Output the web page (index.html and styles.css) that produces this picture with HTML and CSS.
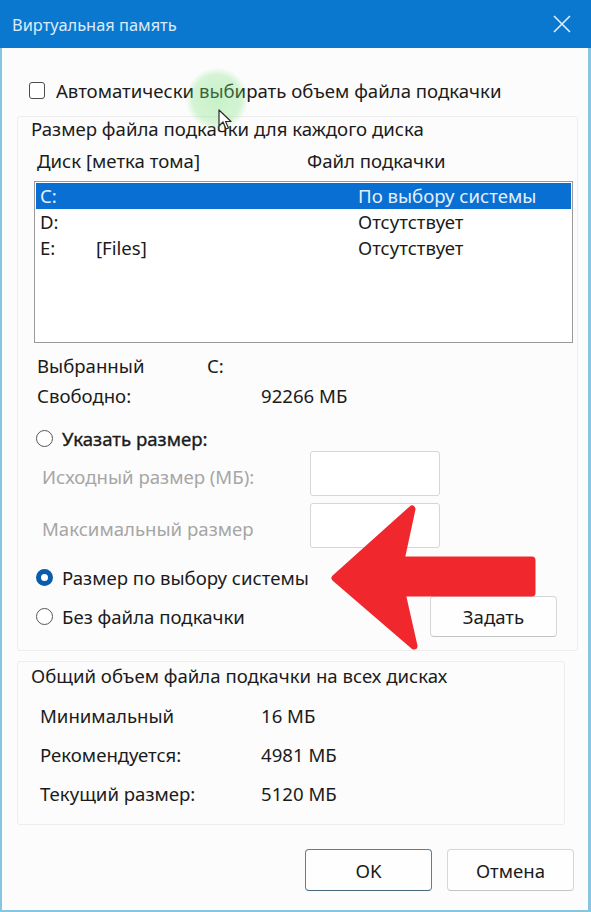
FILE: index.html
```html
<!DOCTYPE html>
<html lang="ru">
<head>
<meta charset="utf-8">
<title>Виртуальная память</title>
<link rel="stylesheet" href="styles.css">
</head>
<body>
<div class="window">
  <div class="titlebar">
    <span class="title">Виртуальная память</span>
    <svg class="close" width="18" height="18" viewBox="0 0 18 18"><path d="M1 1 L17 17 M17 1 L1 17" stroke="#e3eef9" stroke-width="1.6" fill="none"/></svg>
  </div>
  <div class="body">
    <div class="check-row"><span class="checkbox"></span><span>Автоматически выбирать объем файла подкачки</span></div>

    <section class="group group-disk">
      <div class="group-title">Размер файла подкачки для каждого диска</div>
      <div class="list-head"><span class="col-drive">Диск [метка тома]</span><span class="col-file">Файл подкачки</span></div>
      <div class="listbox">
        <div class="list-row selected"><span class="c-drive">C:</span><span class="c-label"></span><span class="c-file">По выбору системы</span></div>
        <div class="list-row"><span class="c-drive">D:</span><span class="c-label"></span><span class="c-file">Отсутствует</span></div>
        <div class="list-row"><span class="c-drive">E:</span><span class="c-label">[Files]</span><span class="c-file">Отсутствует</span></div>
      </div>
      <div class="info-row row-selected"><span class="info-k">Выбранный</span><span class="info-v">C:</span></div>
      <div class="info-row row-free"><span class="info-k">Свободно:</span><span class="info-v">92266 МБ</span></div>
      <div class="radio-row row-custom"><span class="radio"></span><span class="radio-text strong">Указать размер:</span></div>
      <div class="field-row row-f1"><span class="field-label">Исходный размер (МБ):</span><span class="input"></span></div>
      <div class="field-row row-f2"><span class="field-label">Максимальный размер</span><span class="input"></span></div>
      <div class="radio-row row-system"><span class="radio checked"></span><span class="radio-text">Размер по выбору системы</span></div>
      <div class="radio-row row-none"><span class="radio"></span><span class="radio-text">Без файла подкачки</span><button class="btn btn-set">Задать</button></div>
    </section>

    <section class="group group-total">
      <div class="group-title">Общий объем файла подкачки на всех дисках</div>
      <div class="total-row first"><span class="total-k">Минимальный</span><span>16 МБ</span></div>
      <div class="total-row"><span class="total-k">Рекомендуется:</span><span>4981 МБ</span></div>
      <div class="total-row"><span class="total-k">Текущий размер:</span><span>5120 МБ</span></div>
    </section>

    <div class="dialog-buttons">
      <button class="btn btn-ok">OK</button>
      <button class="btn btn-cancel">Отмена</button>
    </div>
  </div>

  <div class="cursor-glow"></div>
  <svg class="cursor" width="16" height="22" viewBox="0 0 16 22"><path d="M1 1 L1 17 L5 13 L8 20 L10.5 19 L7.5 12.5 L13 12.5 Z" fill="#ffffff" stroke="#2a2a2a" stroke-width="1.2" stroke-linejoin="round"/></svg>
  <svg class="arrow" width="220" height="160" viewBox="0 0 220 160">
    <polygon points="16,76 93,7 82,58 213,58 213,91 83,91 95,144" fill="#f0282e" stroke="#f0282e" stroke-width="7" stroke-linejoin="round"/>
  </svg>
</div>
</body>
</html>
```

FILE: styles.css
```css
* { box-sizing: border-box; }
html, body { margin: 0; padding: 0; }
body {
  width: 591px;
  height: 912px;
  overflow: hidden;
  font-family: "Noto Sans", "Liberation Sans", sans-serif;
  font-size: 18.6px;
  color: #1b1b1b;
  background: #fcfcfc;
}
.window {
  position: relative;
  width: 591px;
  height: 912px;
  display: flex;
  flex-direction: column;
}
.titlebar {
  height: 48px;
  flex: none;
  background: #0b78d0;
  display: flex;
  align-items: center;
  justify-content: space-between;
  padding: 0 20px 0 12px;
}
.title { color: #dcebf8; font-size: 16.4px; }
.body {
  flex: 1;
  border-left: 2px solid #86c6e2;
  border-right: 3px solid #86c6e2;
  border-bottom: 2px solid #86c6e2;
  background: #fcfcfc;
  padding: 0 0 0 15px;
}
.check-row {
  height: 24px;
  margin-top: 30px;
  display: flex;
  align-items: center;
  padding-left: 12px;
}
.checkbox {
  width: 16px; height: 17px;
  border: 1.5px solid #4d4d4d;
  border-radius: 3px;
  margin-right: 11px;
  background: #fff;
}
.group {
  border: 1px solid #ededed;
  border-radius: 3px;
}
.group-disk { margin-top: 14px; width: 561px; height: 535px; }
.group-title { height: 24px; line-height: 24px; padding-left: 13px; }
.list-head { display: flex; height: 24px; line-height: 24px; margin-top: 8px; }
.col-drive { padding-left: 19px; width: 289px; }
.listbox {
  margin: 8px 0 0 16px;
  width: 539px;
  height: 162px;
  border: 1px solid #9a9a9a;
  background: #fff;
  padding: 1px;
}
.list-row { display: flex; height: 26px; line-height: 26px; }
.list-row.selected { background: #0a6fd2; color: #e3effb; }
.c-drive { width: 60px; padding-left: 4px; }
.c-label { width: 262px; }
.info-row { display: flex; height: 24px; line-height: 24px; padding-left: 19px; }
.row-selected { margin-top: 11px; }
.row-selected .info-k { width: 170px; }
.row-free { margin-top: 6px; }
.row-free .info-k { width: 224px; }
.radio-row { display: flex; align-items: center; height: 24px; padding-left: 18px; }
.radio {
  width: 17px; height: 17px;
  border: 1.3px solid #555;
  border-radius: 50%;
  margin-right: 9px;
  background: #fff;
  flex: none;
}
.radio.checked { border: 5.5px solid #0a5bab; background: #fff; }
.strong { -webkit-text-stroke: 0.35px #1b1b1b; }
.row-custom { margin-top: 18px; }
.field-row { display: flex; align-items: center; height: 45px; padding-left: 24px; }
.field-label { width: 268px; color: #a6a6a6; padding-top: 6px; }
.input { width: 130px; height: 45px; border: 1px solid #d6d6d6; border-radius: 3px; background: #fff; }
.row-f1 { margin-top: 1px; }
.row-f2 { margin-top: 7px; }
.row-system { margin-top: 17px; }
.row-none { margin-top: 7px; height: 41px; }
.row-none .radio-text { width: 368px; }
.btn {
  font-family: inherit;
  font-size: 18.6px;
  color: #1b1b1b;
  background: #fefefe;
  border: 1px solid #d6d6d6;
  border-bottom-color: #c4c4c4;
  border-radius: 4px;
  padding: 0;
}
.btn-set { width: 127px; height: 41px; }
.group-total { margin-top: 10px; width: 548px; height: 164px; }
.group-total .group-title { margin-top: 2px; }
.total-row { display: flex; height: 24px; line-height: 24px; padding-left: 22px; margin-top: 15px; }
.total-row.first { margin-top: 16px; }
.total-k { width: 221px; }
.dialog-buttons {
  display: flex;
  gap: 15px;
  margin-top: 24px;
  padding-left: 288px;
}
.dialog-buttons .btn { width: 127px; height: 42px; }
.btn-ok { border: 1.5px solid #5a7f98; border-bottom-color: #45667c; }

.cursor-glow {
  position: absolute;
  left: 186px; top: 68px;
  width: 62px; height: 62px;
  border-radius: 50%;
  background: radial-gradient(circle, rgba(120,225,120,0.40) 0%, rgba(120,225,120,0.30) 55%, rgba(120,225,120,0) 72%);
  pointer-events: none;
}
.cursor { position: absolute; left: 218px; top: 109px; }
.arrow { position: absolute; left: 319px; top: 502px; }
```
